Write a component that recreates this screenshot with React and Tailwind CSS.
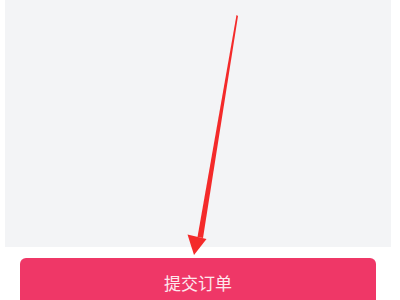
export default function App() {
  return (
    <div className="relative h-[300px] w-[400px] overflow-hidden bg-white" style={{ fontFamily: '"Noto Sans CJK SC", "Noto Sans", sans-serif' }}>
      <div className="ml-[5px] mr-[9px] h-[247px] bg-[#f3f4f6]" />
      <div className="mt-[11px] ml-[20px] mr-[24px] flex h-[48px] items-center justify-center rounded-[6px] bg-[#ef3767]">
        <span className="text-[17px] leading-none text-[#fde8ee]">提交订单</span>
      </div>

      {/* annotation arrow over the page */}
      <svg className="pointer-events-none absolute left-0 top-0" width="400" height="300" viewBox="0 0 400 300">
        <polygon points="236.5,15 238,16 203,238 197.5,237" fill="#f42a2a" />
        <polygon points="187.5,234.5 206.5,239 194,255" fill="#f42a2a" />
      </svg>
    </div>
  );
}
